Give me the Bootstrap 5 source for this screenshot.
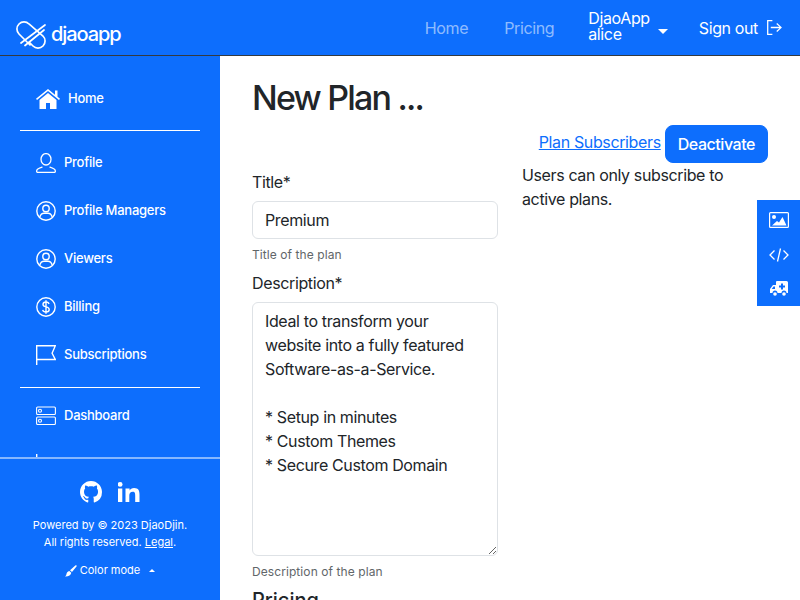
<!DOCTYPE html>
<html lang="en">
<head>
<meta charset="utf-8">
<title>New Plan</title>
<link href="https://cdn.jsdelivr.net/npm/bootstrap@5.3.0/dist/css/bootstrap.min.css" rel="stylesheet">
<style>
html,body{height:100%;overflow:hidden}
body{font-family:Inter,"Liberation Sans",sans-serif;color:#212529;font-size:16px;letter-spacing:-.37px}
.shell{height:600px;display:flex;flex-direction:column}
.topbar{height:56px;background:#0d6efd;border-bottom:1px solid #343a40;flex:none;padding:0 17px 0 16px}
.brandmark{color:#fff;font-size:20px;font-weight:500;text-decoration:none;gap:5px;letter-spacing:-1.1px;padding-top:14px}
.brandword{margin-top:-2px}
.toplink{color:rgba(255,255,255,.55);text-decoration:none;line-height:24px}
.gap-pricing{margin-left:36px}
.gap-user{margin-left:34px}
.gap-signout{margin-left:31px;gap:8px}
.topwhite{color:#fff;text-decoration:none;line-height:24px}
.usertext{line-height:16px;display:block;margin-top:-3px}
.caretdown{width:0;height:0;border-left:5px solid transparent;border-right:5px solid transparent;border-top:5px solid #fff}
.bodyrow{flex:1;min-height:0;display:flex}
.sidebar{width:220px;flex:none;background:#0d6efd;color:#fff;display:flex;flex-direction:column}
.sidescroll{height:401px;overflow:hidden;padding:0 20px;flex:none}
.sidelink{height:48px;display:flex;align-items:center;color:#fff;text-decoration:none;font-size:13px;font-weight:500;padding-left:16px;letter-spacing:-.25px}
.sidehome{height:44px;margin-top:21px;gap:8px}
.siderule{height:1px;background:#fff;margin:0}
.rule-a{margin:9px 0 8px}
.rule-b{margin:8px 0 4px}
.sidefoot{border-top:2px solid rgba(255,255,255,.5);flex:1;text-align:center;font-size:11px;line-height:17px;padding-top:21px;letter-spacing:0}
.sidefoot a{color:#fff}
.socials{gap:16px;height:24px;margin-bottom:13px}
.colormode{font-size:11px;margin-top:11px;gap:3px}
.caretup{width:0;height:0;border-left:3px solid transparent;border-right:3px solid transparent;border-bottom:3px solid #fff;margin-left:6px}
.mainpane{flex:1;min-width:0;padding:0 32px;overflow:hidden}
.pagehead{font-size:34px;font-weight:500;line-height:41px;margin:21px 0 0;letter-spacing:-1.8px}
.planrow{margin-top:7px}
.toolbar{gap:4px}
.toollink{font-size:16px;margin-top:-4px}
.btn-deact{background:#0d6efd;color:#fff;border:1px solid #0d6efd;border-radius:8px;padding:6px 12px;font-size:16px;font-weight:500;line-height:24px;letter-spacing:-.45px}
.activenote{line-height:24px}
.leftcol{padding-top:45px}
.formlabel{display:block;margin-bottom:7px;line-height:24px}
.formbox{border-color:#dee2e6;color:#212529;border-radius:6px;padding:6px 12px;line-height:24px;font-size:16px;letter-spacing:-.37px}
.helpline{font-size:12px;line-height:18px;color:#616669;margin-top:7px;margin-bottom:7px;letter-spacing:.08px}
.descbox{height:254px;display:block;width:100%}
.pricinghead{font-size:20px;font-weight:500;line-height:24px;margin:4px 0 0;letter-spacing:0}
.sidetab{position:absolute;right:0;top:200px;width:43px;height:106px;background:#0d6efd;display:flex;flex-direction:column;align-items:center;padding-top:12px;gap:19.500px}
</style>
</head>
<body>
<div class="shell">
  <nav class="topbar d-flex align-items-center justify-content-between">
    <a class="brandmark d-flex align-items-center" href="#">
      <svg width="30" height="28" viewBox="0 0 30 28" fill="none" stroke="#fff" stroke-width="1.700" stroke-linecap="round"><path d="M13.500 21.500 17 25A7 7 0 0 0 27 15L13 3A7 7 0 0 0 3 13L14 24"/><path d="M5 22 29 4M9 24.500 28 9"/></svg>
      <span class="brandword">djaoapp</span>
    </a>
    <div class="d-flex align-items-center">
      <a class="toplink" href="#">Home</a>
      <a class="toplink gap-pricing" href="#">Pricing</a>
      <a class="topwhite gap-user d-flex align-items-center" href="#"><span class="usertext">DjaoApp<br>alice</span><span class="caretdown ms-2 mt-2"></span></a>
      <a class="topwhite gap-signout d-flex align-items-center" href="#">Sign out
        <svg width="17" height="17" viewBox="0 0 16 16" fill="#fff"><path d="M1 1h5v1.200H2.200v11.600H6V15H1z"/><path d="M10.500 3.800 15 8l-4.500 4.200-.8-.9 3-2.700H4.500V7.400h8.200l-3-2.700z"/></svg>
      </a>
    </div>
  </nav>
  <div class="bodyrow">
    <aside class="sidebar">
      <div class="sidescroll">
        <a class="sidelink sidehome" href="#">
          <svg width="24" height="20" viewBox="0 0 24 20" fill="#fff"><path d="M12 2 1 11l-1-1.300L12 0l7 5.700V1.500h2.500v6.300l2.500 2-1 1.200z"/><path d="M12 4 3.500 11v9H10v-6h4v6h6.500v-9z"/></svg>
          <span>Home</span>
        </a>
        <div class="siderule rule-a"></div>
        <a class="sidelink" href="#">
          <svg width="20" height="20" viewBox="0 0 20 20" fill="none" stroke="#fff" stroke-width="1.300"><ellipse cx="10" cy="6.300" rx="5" ry="5.700"/><path d="M.7 19.300v-1.500c0-2.300 3.700-3.200 5.800-3.800M19.300 19.300v-1.500c0-2.300-3.700-3.200-5.800-3.800M.7 19.300h18.600"/></svg>
          <span class="ms-2">Profile</span>
        </a>
        <a class="sidelink" href="#">
          <svg width="20" height="20" viewBox="0 0 20 20" fill="none" stroke="#fff" stroke-width="1.400"><circle cx="10" cy="10" r="9.200"/><circle cx="10" cy="7.500" r="3.200"/><path d="M3.800 16c.8-2.600 2.600-3.800 4.200-3.800h4c1.600 0 3.400 1.200 4.200 3.800"/></svg>
          <span class="ms-2">Profile Managers</span>
        </a>
        <a class="sidelink" href="#">
          <svg width="20" height="20" viewBox="0 0 20 20" fill="none" stroke="#fff" stroke-width="1.400"><circle cx="10" cy="10" r="9.200"/><circle cx="10" cy="7.500" r="3.200"/><path d="M3.800 16c.8-2.600 2.600-3.800 4.200-3.800h4c1.600 0 3.400 1.200 4.200 3.800"/></svg>
          <span class="ms-2">Viewers</span>
        </a>
        <a class="sidelink" href="#">
          <svg width="20" height="20" viewBox="0 0 20 20" fill="none" stroke="#fff" stroke-width="1.400"><circle cx="10" cy="10" r="9.200"/><path d="M13 7c-.3-1.300-1.500-2-3-2s-3 .8-3 2.400c0 3.300 6.200 1.700 6.200 5.100 0 1.600-1.500 2.500-3.200 2.500s-3-.8-3.300-2.200M10 3.300v13.400"/></svg>
          <span class="ms-2">Billing</span>
        </a>
        <a class="sidelink" href="#">
          <svg width="20" height="20" viewBox="0 0 20 20" fill="none" stroke="#fff" stroke-width="1.400"><path d="M.7 20V.7h18.600l-3.200 7.600 3.200 6.200H.7"/></svg>
          <span class="ms-2">Subscriptions</span>
        </a>
        <div class="siderule rule-b"></div>
        <a class="sidelink" href="#">
          <svg width="20" height="20" viewBox="0 0 20 20" fill="none" stroke="#fff" stroke-width="1.100"><rect x=".6" y="1" width="18.800" height="7.500" rx="1"/><rect x=".6" y="11" width="18.800" height="7.500" rx="1"/><circle cx="4" cy="4.700" r="1.500"/><circle cx="4" cy="14.700" r="1.500"/></svg>
          <span class="ms-2">Dashboard</span>
        </a>
        <a class="sidelink" href="#"><svg width="20" height="20" viewBox="0 0 20 20" fill="none" stroke="#fff" stroke-width="1.400"><path d="M.7 0v20"/></svg></a>
      </div>
      <div class="sidefoot">
        <div class="socials d-flex justify-content-center align-items-center">
          <svg width="22" height="22" viewBox="0 0 16 16" fill="#fff"><path d="M8 0C3.580 0 0 3.580 0 8c0 3.540 2.290 6.530 5.470 7.590.4.070.55-.17.55-.38 0-.19-.01-.82-.01-1.490-2.010.37-2.530-.49-2.690-.94-.09-.23-.48-.94-.82-1.130-.28-.15-.68-.52-.01-.53.63-.01 1.080.58 1.230.82.720 1.210 1.870.87 2.330.66.070-.52.280-.87.510-1.070-1.780-.2-3.640-.89-3.640-3.950 0-.87.310-1.590.820-2.150-.08-.2-.36-1.020.08-2.120 0 0 .67-.21 2.200.82.640-.18 1.320-.27 2-.27.680 0 1.360.09 2 .27 1.530-1.040 2.200-.82 2.200-.82.440 1.100.160 1.920.08 2.120.51.560.82 1.270.82 2.150 0 3.070-1.870 3.750-3.650 3.950.29.250.54.730.54 1.480 0 1.070-.01 1.930-.01 2.200 0 .21.150.46.55.38A8.010 8.010 0 0 0 16 8c0-4.420-3.580-8-8-8z"/></svg>
          <svg width="22" height="20" viewBox="0 0 22 20" fill="#fff"><rect x="0" y="6.500" width="4.300" height="13.500"/><circle cx="2.150" cy="2.400" r="2.400"/><path d="M7.500 6.500h4.100v1.900c.7-1.300 2.300-2.300 4.500-2.300 4.400 0 5.400 2.800 5.400 6.500V20h-4.300v-6.500c0-1.700-.1-3.800-2.400-3.800s-3.500 1.700-3.500 3.700V20H7.500z"/></svg>
        </div>
        <div>Powered by © 2023 DjaoDjin.</div>
        <div>All rights reserved. <a href="#">Legal</a>.</div>
        <div class="colormode d-flex justify-content-center align-items-center">
          <svg width="12" height="12" viewBox="0 0 12 12" fill="#fff"><path d="M11.500.4c.4.3.3.8 0 1.200L7 7 5 5.200 10.300.6c.4-.3.800-.5 1.200-.2z"/><path d="M4.300 5.900 6.300 7.700C6 10 3.500 11.800 0 11.600c1.500-1 1.200-2.300 1.800-3.600.5-1.200 1.500-2 2.500-2.100z"/></svg>
          <span>Color mode</span><span class="caretup"></span>
        </div>
      </div>
    </aside>
    <main class="mainpane">
      <h1 class="pagehead">New Plan ...</h1>
      <div class="row planrow">
        <div class="col-6 order-2">
          <div class="d-flex justify-content-end align-items-center toolbar">
            <a class="toollink" href="#">Plan Subscribers</a>
            <button class="btn-deact" type="button">Deactivate</button>
          </div>
          <div class="activenote">Users can only subscribe to active plans.</div>
        </div>
        <div class="col-6 order-1 leftcol">
          <label class="formlabel" for="ttl">Title*</label>
          <input id="ttl" class="form-control formbox" value="Premium">
          <div class="helpline">Title of the plan</div>
          <label class="formlabel" for="dsc">Description*</label>
          <textarea id="dsc" class="form-control formbox descbox">Ideal to transform your website into a fully featured Software-as-a-Service.

* Setup in minutes
* Custom Themes
* Secure Custom Domain</textarea>
          <div class="helpline">Description of the plan</div>
          <h5 class="pricinghead">Pricing</h5>
        </div>
      </div>
    </main>
  </div>
</div>
<div class="sidetab">
  <svg width="20" height="16" viewBox="0 0 20 16" fill="#fff"><path fill-rule="evenodd" d="M1.500 0h17A1.500 1.500 0 0 1 20 1.500v13a1.500 1.500 0 0 1-1.500 1.500h-17A1.500 1.500 0 0 1 0 14.500v-13A1.500 1.500 0 0 1 1.500 0zm0 1.200a.3.3 0 0 0-.3.3v13c0 .2.100.3.3.3h17a.3.3 0 0 0 .3-.3v-13a.3.3 0 0 0-.3-.3z"/><circle cx="5" cy="5" r="2"/><path d="M3 13.500 8 9l2 1.600L13.500 5 17.500 13.500z"/></svg>
  <svg width="20" height="14" viewBox="0 0 20 14" fill="none" stroke="#fff" stroke-width="1.300"><path d="M5.500 2.500 1 7l4.500 4.500M14.500 2.500 19 7l-4.500 4.500M11.500 .5 8.500 13.500"/></svg>
  <svg width="18" height="15" viewBox="0 0 18 15" fill="#fff"><path fill-rule="evenodd" d="M7 0h9.500A1.500 1.500 0 0 1 18 1.500V12h-1.500a2.500 2.500 0 0 0-5 0h-4a2.500 2.500 0 0 0-5 0H0V8l3-4h3V1a1 1 0 0 1 1-1zM11 2.500v2H9v2h2v2h2v-2h2v-2h-2v-2zM3.500 5.500 1.800 8H5V5.500z"/><circle cx="5" cy="13" r="1.800"/><circle cx="14" cy="13" r="1.800"/></svg>
</div>
<script src="https://cdn.jsdelivr.net/npm/bootstrap@5.3.0/dist/js/bootstrap.bundle.min.js"></script>
</body>
</html>
